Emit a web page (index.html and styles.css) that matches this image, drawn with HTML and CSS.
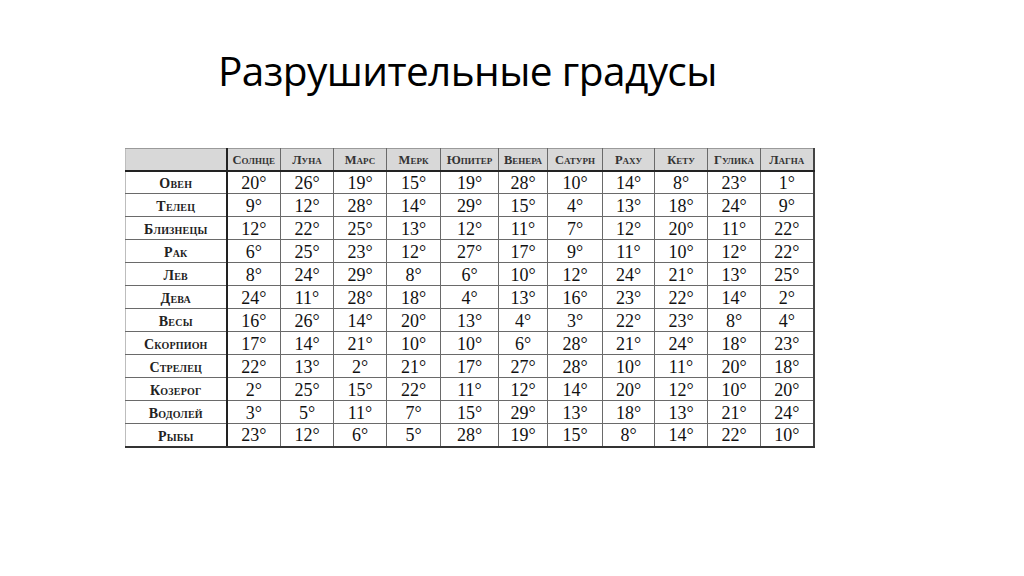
FILE: index.html
```html
<!DOCTYPE html>
<html lang="ru">
<head>
<meta charset="utf-8">
<title>Разрушительные градусы</title>
<link rel="stylesheet" href="styles.css">
</head>
<body>
<div class="slide">
  <h1 class="title">Разрушительные градусы</h1>
  <table class="deg">
    <colgroup>
      <col class="c-label">
      <col class="c54"><col class="c53"><col class="c53"><col class="c54"><col class="c58"><col class="c49"><col class="c55"><col class="c52"><col class="c53"><col class="c53"><col class="c53">
    </colgroup>
    <thead>
      <tr><th class="corner"></th><th>Солнце</th><th>Луна</th><th>Марс</th><th>Мерк</th><th>Юпитер</th><th>Венера</th><th>Сатурн</th><th>Раху</th><th>Кету</th><th>Гулика</th><th>Лагна</th></tr>
    </thead>
    <tbody>
      <tr><th>Овен</th><td>20°</td><td>26°</td><td>19°</td><td>15°</td><td>19°</td><td>28°</td><td>10°</td><td>14°</td><td>8°</td><td>23°</td><td>1°</td></tr>
      <tr><th>Телец</th><td>9°</td><td>12°</td><td>28°</td><td>14°</td><td>29°</td><td>15°</td><td>4°</td><td>13°</td><td>18°</td><td>24°</td><td>9°</td></tr>
      <tr><th>Близнецы</th><td>12°</td><td>22°</td><td>25°</td><td>13°</td><td>12°</td><td>11°</td><td>7°</td><td>12°</td><td>20°</td><td>11°</td><td>22°</td></tr>
      <tr><th>Рак</th><td>6°</td><td>25°</td><td>23°</td><td>12°</td><td>27°</td><td>17°</td><td>9°</td><td>11°</td><td>10°</td><td>12°</td><td>22°</td></tr>
      <tr><th>Лев</th><td>8°</td><td>24°</td><td>29°</td><td>8°</td><td>6°</td><td>10°</td><td>12°</td><td>24°</td><td>21°</td><td>13°</td><td>25°</td></tr>
      <tr><th>Дева</th><td>24°</td><td>11°</td><td>28°</td><td>18°</td><td>4°</td><td>13°</td><td>16°</td><td>23°</td><td>22°</td><td>14°</td><td>2°</td></tr>
      <tr><th>Весы</th><td>16°</td><td>26°</td><td>14°</td><td>20°</td><td>13°</td><td>4°</td><td>3°</td><td>22°</td><td>23°</td><td>8°</td><td>4°</td></tr>
      <tr><th>Скорпион</th><td>17°</td><td>14°</td><td>21°</td><td>10°</td><td>10°</td><td>6°</td><td>28°</td><td>21°</td><td>24°</td><td>18°</td><td>23°</td></tr>
      <tr><th>Стрелец</th><td>22°</td><td>13°</td><td>2°</td><td>21°</td><td>17°</td><td>27°</td><td>28°</td><td>10°</td><td>11°</td><td>20°</td><td>18°</td></tr>
      <tr><th>Козерог</th><td>2°</td><td>25°</td><td>15°</td><td>22°</td><td>11°</td><td>12°</td><td>14°</td><td>20°</td><td>12°</td><td>10°</td><td>20°</td></tr>
      <tr><th>Водолей</th><td>3°</td><td>5°</td><td>11°</td><td>7°</td><td>15°</td><td>29°</td><td>13°</td><td>18°</td><td>13°</td><td>21°</td><td>24°</td></tr>
      <tr><th>Рыбы</th><td>23°</td><td>12°</td><td>6°</td><td>5°</td><td>28°</td><td>19°</td><td>15°</td><td>8°</td><td>14°</td><td>22°</td><td>10°</td></tr>
    </tbody>
  </table>
</div>
</body>
</html>
```
FILE: styles.css
```css
html, body {
  margin: 0;
  padding: 0;
  background: #ffffff;
}
.slide {
  width: 1024px;
  height: 576px;
  box-sizing: border-box;
  padding: 44px 0 0 125px;
  overflow: hidden;
}
.title {
  margin: 0 0 0 93px;
  font-family: "Open Sans", "Noto Sans", sans-serif;
  font-weight: 500;
  font-size: 40.6px;
  line-height: 54px;
  color: #000;
  letter-spacing: -0.6px;
}
.deg {
  margin-top: 50px;
  border-collapse: collapse;
  table-layout: fixed;
  width: 688px;
  font-family: "Liberation Serif", "Times New Roman", serif;
  color: #111;
}
.c-label { width: 101px; }
.c49 { width: 49px; }
.c52 { width: 52px; }
.c53 { width: 53px; }
.c54 { width: 54px; }
.c55 { width: 55px; }
.c58 { width: 58px; }
.deg tr {
  height: 23px;
}
.deg thead tr {
  height: 22px;
}
.deg th, .deg td {
  border: 1px solid #6a6a6a;
  padding: 0;
  text-align: center;
  line-height: 16px;
  vertical-align: middle;
}
.deg thead th {
  background: #d8d8d8;
  font-size: 12.5px;
  font-weight: 700;
  font-variant: small-caps;
  color: #333;
  border-top: 1px solid #9a9a9a;
  border-bottom: 2px solid #222;
  padding-top: 2px;
  white-space: nowrap;
  overflow: hidden;
}
.deg thead th.corner {
  border-left: 1px solid #bdbdbd;
}
.deg tbody th {
  font-size: 14px;
  font-weight: 700;
  font-variant: small-caps;
  letter-spacing: 0.2px;
  color: #222;
  border-left: 1px solid #bdbdbd;
  padding-top: 4px;
  white-space: nowrap;
}
.deg tr > :first-child {
  border-right: 2px solid #222;
}
.deg td {
  font-size: 18px;
  padding-top: 1px;
}
.deg tbody tr:last-child > * {
  border-bottom: 2px solid #333;
}
.deg tr > :last-child {
  border-right: 2px solid #444;
}
```
